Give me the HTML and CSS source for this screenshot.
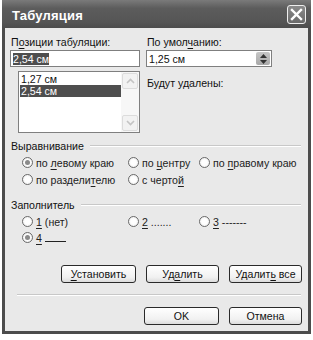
FILE: index.html
```html
<!DOCTYPE html>
<html>
<head>
	<meta charset="utf-8" />
	<title>Табуляция</title>
	<link rel="stylesheet" href="styles.css">
</head>
<body>
	<div class="window">
		<div class="titlebar">
			<span class="title">Табуляция</span>
			<span class="close">
				<svg width="13" height="13" viewBox="0 0 13 13"><path d="M2 2 L11 11 M11 2 L2 11" stroke="#fff" stroke-width="2.4" stroke-linecap="square"/></svg>
			</span>
		</div>
		<div class="content">
			<div class="top">
				<div class="col-left">
					<div class="label">П<u>о</u>зиции табуляции:</div>
					<div class="field"><span class="sel">2,54 см</span></div>
					<div class="listbox">
						<div class="items">
							<div class="item">1,27 см</div>
							<div class="item selected">2,54 см</div>
						</div>
						<div class="scrollbar">
							<div class="arrow">
								<svg width="9" height="6" viewBox="0 0 9 6"><path d="M1 5 L4.5 1.5 L8 5" fill="none" stroke="#c4c4c4" stroke-width="1.6"/></svg>
							</div>
							<div class="arrow">
								<svg width="9" height="6" viewBox="0 0 9 6"><path d="M1 1 L4.5 4.5 L8 1" fill="none" stroke="#c4c4c4" stroke-width="1.6"/></svg>
							</div>
						</div>
					</div>
				</div>
				<div class="col-right">
					<div class="label">По умол<u>ч</u>анию:</div>
					<div class="field spin">
						<span>1,25 см</span>
						<div class="spin-btn">
							<svg width="7" height="4" viewBox="0 0 7 4"><path d="M0 4 L3.5 0 L7 4 Z" fill="#333"/></svg>
							<svg width="7" height="4" viewBox="0 0 7 4"><path d="M0 0 L3.5 4 L7 0 Z" fill="#333"/></svg>
						</div>
					</div>
					<div class="note">Будут удалены:</div>
				</div>
			</div>

			<div class="group">
				<div class="group-head"><span>Выравнивание</span><i></i></div>
				<div class="radios">
					<div class="radio checked"><b></b><span>по <u>л</u>евому краю</span></div>
					<div class="radio"><b></b><span>по <u>ц</u>ентру</span></div>
					<div class="radio"><b></b><span>по <u>п</u>равому краю</span></div>
					<div class="radio"><b></b><span>по раздели<u>т</u>елю</span></div>
					<div class="radio"><b></b><span>с черто<u>й</u></span></div>
				</div>
			</div>

			<div class="group fill">
				<div class="group-head"><span>Заполнитель</span><i></i></div>
				<div class="radios">
					<div class="radio"><b></b><span><u>1</u> (нет)</span></div>
					<div class="radio"><b></b><span><u>2</u> .......</span></div>
					<div class="radio"><b></b><span><u>3</u> -------</span></div>
					<div class="radio checked"><b></b><span><u>4</u> <span class="leader"></span></span></div>
				</div>
			</div>

			<div class="buttons">
				<button type="button"><u>У</u>становить</button>
				<button type="button">Уд<u>а</u>лить</button>
				<button type="button">Удалит<u>ь</u> все</button>
			</div>

			<div class="separator"></div>

			<div class="buttons">
				<button type="button">OK</button>
				<button type="button">Отмена</button>
			</div>
		</div>
	</div>
</body>
</html>
```

FILE: styles.css
```css
body {
	margin: 0;
	background-color: #fff;
	font-family: "Liberation Sans", Arial, sans-serif;
	font-size: 10.6px;
	color: #111;
}

u {
	text-decoration-thickness: 1px;
	text-underline-offset: 2px;
}

/* Window frame */
.window {
	width: 303px;
	height: 331px;
	margin-left: 2px;
	background-color: #e9e9e9;
	border: 3px solid #4c4c4c;
	border-top: none;
}

.titlebar {
	height: 28px;
	margin: 0 -3px;
	padding: 0 5px 0 10px;
	display: flex;
	align-items: center;
	justify-content: space-between;
	background: linear-gradient(#7a7a7a, #5c5c5c 30%, #555 80%, #4c4c4c);
}

.title {
	color: #fff;
	font-weight: bold;
	font-size: 13px;
	letter-spacing: 0.2px;
	padding-top: 2px;
}

.close {
	width: 17px;
	height: 17px;
	border: 1px solid #eee;
	border-radius: 3px;
	background: linear-gradient(#8a8a8a, #6a6a6a);
	display: flex;
	align-items: center;
	justify-content: center;
}

.content {
	padding: 8px 5px 0 5px;
}

/* Top fields */
.top {
	display: flex;
	gap: 6px;
	height: 103px;
}

.col-left {
	width: 130px;
}

.col-right {
	width: 126px;
}

.label {
	height: 14px;
	line-height: 13px;
	padding-left: 1px;
}

.field {
	height: 15px;
	border: 1px solid #7f7f7f;
	background-color: #fff;
	display: flex;
	align-items: center;
	padding-left: 2px;
}

.sel {
	background-color: #4e4e4e;
	color: #fff;
	line-height: 12px;
}

.spin {
	justify-content: space-between;
	padding-right: 1px;
}

.spin-btn {
	width: 14px;
	height: 13px;
	background: linear-gradient(#c6c6c6, #a8a8a8);
	border-radius: 2px;
	display: flex;
	flex-direction: column;
	align-items: center;
	justify-content: center;
	gap: 2px;
}

.note {
	margin-top: 10px;
	padding-left: 1px;
}

.listbox {
	margin: 4px 0 0 8px;
	height: 60px;
	border: 1px solid #7f7f7f;
	background-color: #fff;
	display: flex;
}

.items {
	flex: 1;
	padding: 1px 0 0 1px;
}

.item {
	height: 12px;
	line-height: 12px;
	padding-left: 1px;
}

.item.selected {
	background-color: #4e4e4e;
	color: #fff;
}

.scrollbar {
	width: 16px;
	display: flex;
	flex-direction: column;
	justify-content: space-between;
	background-color: #f7f7f7;
	padding: 1px;
}

.arrow {
	height: 14px;
	border: 1px solid #dcdcdc;
	border-radius: 2px;
	background-color: #f2f2f2;
	display: flex;
	align-items: center;
	justify-content: center;
}

/* Groups */
.group-head {
	display: flex;
	align-items: center;
	gap: 6px;
	height: 13px;
	padding-left: 1px;
	padding-right: 2px;
}

.group-head i {
	flex: 1;
	border-top: 1px solid #c8c8c8;
	border-bottom: 1px solid #fff;
	margin-top: 1px;
}

.radios {
	display: grid;
	grid-template-columns: 106px 71px auto;
	padding-left: 12px;
	margin-top: 4px;
	row-gap: 4px;
}

.radio {
	display: flex;
	align-items: center;
	height: 13px;
	gap: 3px;
	color: #222;
	white-space: nowrap;
}

.radio b {
	width: 9px;
	height: 9px;
	border: 1px solid #6a6a6a;
	border-radius: 50%;
	background: radial-gradient(#fff 40%, #e4e4e4);
	display: flex;
	align-items: center;
	justify-content: center;
}

.radio.checked b::after {
	content: "";
	width: 5px;
	height: 5px;
	border-radius: 50%;
	background-color: #8a8a8a;
}

.fill {
	margin-top: 12px;
}

.fill .radios {
	row-gap: 3px;
}

.leader {
	display: inline-block;
	width: 21px;
	height: 10px;
	border-bottom: 1px solid #222;
}

/* Buttons */
.buttons {
	display: flex;
	justify-content: flex-end;
	gap: 10px;
	padding-right: 1px;
}

.fill + .buttons {
	margin-top: 21px;
}

button {
	width: 73px;
	height: 18px;
	padding: 0;
	border: 1px solid #2a2a2a;
	border-radius: 3px;
	background: linear-gradient(#fff, #f1f1f1 70%, #dcdcdc);
	font-family: "Liberation Sans", Arial, sans-serif;
	font-size: 10.6px;
	color: #111;
}

.buttons button:first-child {
	width: 75px;
}

.separator {
	margin: 11px 2px 11px 7px;
	border-top: 1px solid #c8c8c8;
	border-bottom: 1px solid #fff;
}
```
